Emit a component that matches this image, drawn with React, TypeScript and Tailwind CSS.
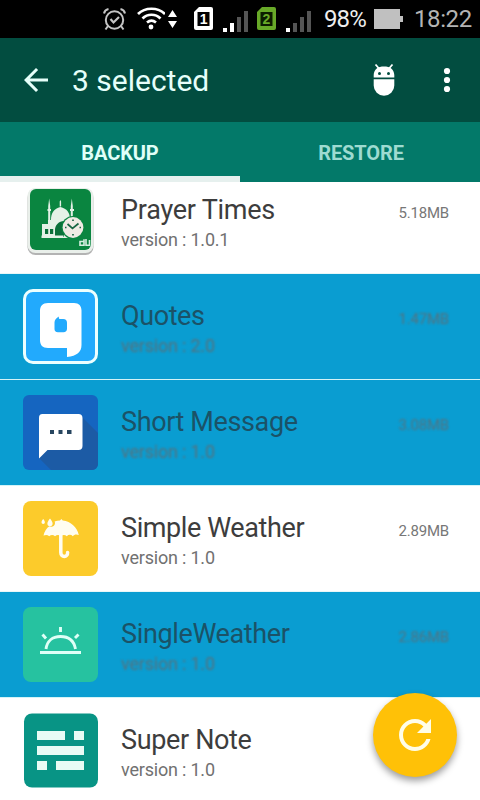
import type { ReactNode } from "react";
import clsx from "clsx";

type AppItem = {
  name: string;
  version: string;
  size: string;
  selected?: boolean;
  icon: ReactNode;
  nameClass: string;
};

function PrayerIcon() {
  return (
    <svg width="75" height="75" viewBox="0 0 75 75">
      <rect x="4.500" y="7" width="66" height="65" rx="8" fill="#9a9a9a" opacity=".75" />
      <rect x="4.500" y="5" width="66" height="65" rx="8" fill="#e9efea" />
      <rect x="7" y="6" width="61" height="61" rx="6" fill="#0a8540" />
      <g fill="#e4f1e6">
        <path d="M25.200 23l1-7.500 1 7.500v19h-2zM36.700 18.500l.7-1.500.7 1.500v5h-1.400zM47.800 23l1-7.500 1 7.500v20h-2z" />
        <path d="M24.500 26h3.500v2h-3.500zM47 26h4v2h-4z" />
        <path d="M28 37c0-7 3-11.500 9.400-13 6.600 1.500 9.600 6 9.600 12v19H19V41h6v-4z" />
      </g>
      <path d="M22 46h3.200v5H22zM27 46h3.200v5H27zM32 54V47c0-5 4-9 9-9v16z" fill="#0a7039" />
      <path d="M18.500 52.500h22v2.500h-22z" fill="#e4f1e6" />
      <circle cx="50" cy="44.500" r="11.500" fill="#0a8540" />
      <circle cx="50" cy="44.500" r="10.400" fill="#efebe4" />
      <path d="M44.500 41l5 4.500 6-5M50 36.500v1.500M50 51v1.500M42 44.500h1.500M56.500 44.500H58" stroke="#176543" strokeWidth="1.700" fill="none" />
      <path d="M60.500 58.500h-3.500v3.700h4v-6M63 56v6.200h3.500V57" stroke="#d5eee0" strokeWidth="1.600" fill="none" />
    </svg>
  );
}

function QuotesIcon() {
  return (
    <svg width="75" height="75" viewBox="0 0 75 75">
      <rect x="1.500" y="1.500" width="72" height="72" rx="8.500" fill="#22aafd" stroke="#ecffff" strokeWidth="3" />
      <path
        fillRule="evenodd"
        fill="#fff"
        d="M25 14h26c5 0 7.500 3 7.500 7.500V56c0 7-4.500 11-14.500 12v-9H25c-5.500 0-8-3-8-8V22c0-5 2.500-8 8-8zM36 27.500c-3 1.500-4.500 3.500-4.500 6V40c0 2 1 3.200 3.500 3.200h5.500c2.200 0 3.500-1.200 3.500-3.400v-6c0-2.500-1.200-3.800-3.800-3.800H36.500c-.8-.5-.8-1.300-.5-2.500z"
      />
    </svg>
  );
}

function MessageIcon() {
  return (
    <svg width="75" height="75" viewBox="0 0 75 75">
      <rect width="75" height="75" rx="6" fill="#1565c0" />
      <path d="M58 21l17 17v31a6 6 0 0 1-6 6H28L16 63l8-9h31z" fill="#1c5ba5" />
      <path d="M19.500 19h36c2.500 0 4 1.500 4 4v28c0 2.500-1.500 4-4 4H24.500L16 63.500V23c0-2.500 1-4 3.500-4z" fill="#fff" />
      <path d="M27 35h4v4h-4zM35.500 35h4v4h-4zM44 35h4.500v4H44z" fill="#27455f" />
    </svg>
  );
}

function UmbrellaIcon() {
  return (
    <svg width="75" height="75" viewBox="0 0 75 75">
      <rect width="75" height="75" rx="8" fill="#fccb2b" />
      <path
        fill="#fffdf0"
        d="M20.500 34.500C21.500 30 23.500 27 26.500 25.200c2.500 1.300 5.500-.2 5.500-3.200 0-.5-.2-1-.4-1.400 1.700-.6 3.500-1 5.400-1.100L38.400 18l1.300 1.500C48 20.500 54 26 55.800 34c-2.300-1-4.500-.7-6 1.200-1.700-1.800-4.200-1.800-6 0-1.700-1.700-4.200-1.700-6 0-1.700-1.700-4-1.700-5.800 0-1.700-1.700-4-1.700-5.800 0-1.500-1.500-3.500-1.700-5.700-.7z"
      />
      <path
        fill="#fffdf0"
        d="M27 17.500c1.800 2.400 2.600 3.800 2.600 5a2.600 2.600 0 0 1-5.200 0c0-1.200.8-2.600 2.600-5zM20.200 18c1.300 1.700 1.700 2.500 1.700 3.200a1.700 1.700 0 0 1-3.400 0c0-.7.4-1.500 1.700-3.200z"
      />
      <path d="M37.800 33v18.500c0 5.500 7.200 5 6.800 0" stroke="#fffdf0" strokeWidth="3.500" strokeLinecap="round" fill="none" />
    </svg>
  );
}

function SunIcon() {
  return (
    <svg width="75" height="75" viewBox="0 0 75 75">
      <rect width="75" height="75" rx="8" fill="#26c2a0" />
      <path
        d="M17 45.500h41M23 42c1-8 6.500-12.500 14.500-12.500S51 34 52.500 42M37.500 20v5M19.500 27.500l3.500 4M55.500 27.500L52 31"
        stroke="#dffff7"
        strokeWidth="2.900"
        fill="none"
      />
    </svg>
  );
}

function NoteIcon() {
  return (
    <svg width="75" height="75" viewBox="0 0 75 75">
      <rect x="1" y="0.500" width="74" height="74" rx="8" fill="#089485" />
      <path d="M14 18h28v9H14zM51 18h10v9H51zM14 33h47v9H14zM14 48h10v9H14zM33 48h28v9H33z" fill="#e8fbf5" />
    </svg>
  );
}

const apps: AppItem[] = [
  { name: "Prayer Times", version: "1.0.1", size: "5.18MB", icon: <PrayerIcon />, nameClass: "tracking-[-0.25px]" },
  { name: "Quotes", version: "2.0", size: "1.47MB", selected: true, icon: <QuotesIcon />, nameClass: "tracking-[-0.4px]" },
  { name: "Short Message", version: "1.0", size: "3.08MB", selected: true, icon: <MessageIcon />, nameClass: "tracking-[-0.38px]" },
  { name: "Simple Weather", version: "1.0", size: "2.89MB", icon: <UmbrellaIcon />, nameClass: "tracking-[-0.4px]" },
  { name: "SingleWeather", version: "1.0", size: "2.86MB", selected: true, icon: <SunIcon />, nameClass: "tracking-[-0.36px]" },
  { name: "Super Note", version: "1.0", size: "", icon: <NoteIcon />, nameClass: "tracking-[-0.35px]" },
];

function StatusBar() {
  return (
    <div className="flex h-[38px] shrink-0 items-center bg-black pl-[102px] text-[24px] leading-none">
      <svg width="26" height="38" viewBox="0 0 26 38" fill="none" stroke="#c4c4c4">
        <circle cx="12.500" cy="20" r="8.700" strokeWidth="2" />
        <path d="M8.500 19l3 3.500 5.500-5.500" strokeWidth="2.200" />
        <path d="M2 13.500c.5-2.500 2-4 4.500-4.500M18.500 9c2.500.5 4 2 4.500 4.500M6 26l-2.500 3.500M19 26l2.500 3.500" strokeWidth="2" />
      </svg>
      <svg width="29" height="38" viewBox="0 0 29 38" className="ml-2" fill="none" stroke="#fff">
        <path d="M2 14c7-7 20-7 27 0M6.500 18.500c5-5 13-5 18 0M11 22.500c3-2.500 6-2.500 9 0" strokeWidth="2.700" />
        <circle cx="15" cy="27" r="2.400" fill="#fff" stroke="none" />
      </svg>
      <svg width="9" height="38" viewBox="0 0 9 38" className="ml-[3px]" fill="#fff">
        <path d="M4.500 10L9 17H0zM4.500 28L9 21H0z" />
      </svg>
      <svg width="19" height="38" viewBox="0 0 19 38" className="ml-[17px]">
        <path d="M5 7h12a2 2 0 0 1 2 2v19a2 2 0 0 1-2 2H2a2 2 0 0 1-2-2V12z" fill="#fff" />
        <path d="M3.500 12h12v14h-12z" fill="#000" />
        <text x="5.800" y="24" fill="#fff" fontSize="14" fontWeight="700" fontFamily="Liberation Sans, sans-serif">1</text>
      </svg>
      <svg width="26" height="38" viewBox="0 0 26 38" className="ml-2.5">
        <path d="M0 28h4v4H0zM7 23h4v9H7z" fill="#fff" />
        <path d="M14 17h4v15h-4zM21 11h4v21h-4z" fill="#555" />
      </svg>
      <svg width="19" height="38" viewBox="0 0 19 38" className="ml-2">
        <path d="M5 7h12a2 2 0 0 1 2 2v19a2 2 0 0 1-2 2H2a2 2 0 0 1-2-2V12z" fill="#68a928" />
        <path d="M3.500 12h12v14h-12z" fill="#0c1c00" />
        <text x="5.500" y="24" fill="#68a928" fontSize="14" fontWeight="700" fontFamily="Liberation Sans, sans-serif">2</text>
      </svg>
      <svg width="26" height="38" viewBox="0 0 26 38" className="ml-[10px]">
        <path d="M0 28h4v4H0z" fill="#fff" />
        <path d="M7 23h4v9H7zM14 17h4v15h-4zM21 11h4v21h-4z" fill="#555" />
      </svg>
      <span className="ml-[12px] w-[44px] whitespace-nowrap tracking-[-0.9px] text-[#eee]">98%</span>
      <svg width="29" height="38" viewBox="0 0 29 38" className="ml-[6px]" fill="#c0c0c0">
        <path d="M0 9h26v7h3v6h-3v7H0z" />
      </svg>
      <span className="ml-[11px] whitespace-nowrap tracking-[-0.4px] text-[#b4b4b4]">18:22</span>
    </div>
  );
}

function Toolbar() {
  return (
    <header className="flex h-[84px] shrink-0 items-center bg-[#024d40] pl-[18px] text-[#e6fffa]">
      <svg width="36" height="36" viewBox="0 0 24 24" fill="currentColor">
        <path d="M20 11H7.830l5.590-5.590L12 4l-8 8 8 8 1.410-1.410L7.830 13H20v-2z" />
      </svg>
      <h1 className="ml-[18px] mt-0.5 text-[30px] leading-none">3 selected</h1>
      <div className="ml-auto flex items-center pr-[29px]">
        <svg width="24" height="34" viewBox="0 0 24 34">
          <path d="M3.500 1.500l3.500 4M20.500 1.500l-3.500 4" stroke="#fff" strokeWidth="1.800" />
          <path d="M1.700 14.500V12C2 6 6 3.500 12 3.500s10 2.500 10.300 8.500v2.500zM1.700 16.300h20.600v6.200a10.300 10.300 0 0 1-20.600 0z" fill="#fff" />
          <circle cx="7.500" cy="10.500" r="1.500" fill="#024d40" />
          <circle cx="16.500" cy="10.500" r="1.500" fill="#024d40" />
        </svg>
        <svg width="8" height="30" viewBox="0 0 8 30" className="ml-[47px]" fill="#fff">
          <circle cx="4" cy="6" r="3.100" />
          <circle cx="4" cy="15" r="3.100" />
          <circle cx="4" cy="24" r="3.100" />
        </svg>
      </div>
    </header>
  );
}

function Tabs() {
  return (
    <nav className="grid h-[60px] shrink-0 grid-cols-2 bg-[#037969] text-center text-[20px] font-bold leading-[62px] tracking-[-0.1px]">
      <div className="h-[60px] border-b-[6px] border-[#e6f0ee] text-[#e0fff8]">BACKUP</div>
      <div className="pl-[2px] text-[#9edbd1]">RESTORE</div>
    </nav>
  );
}

function AppRow({ item }: { item: AppItem }) {
  const { name, version, size, selected, icon, nameClass } = item;
  return (
    <li
      className={clsx(
        "flex h-[106px] shrink-0 border-b pl-[23px] pr-[31px]",
        selected ? "border-[#d3f3f7] bg-[#0a9dd1]" : "border-[#e8f7f8] bg-white"
      )}
    >
      <div className="mt-[15px] h-[75px] w-[75px] shrink-0">{icon}</div>
      <div className="ml-[23px] flex-1 whitespace-nowrap">
        <div className={clsx("mt-[26px] text-[27px] leading-8", nameClass, selected ? "text-[#1b5267]" : "text-[#3d3d3d]")}>
          {name}
        </div>
        <div
          className={clsx(
            "mt-1 text-[18px] leading-5 tracking-[-0.2px]",
            selected ? "text-[#54727f] blur-[0.9px]" : "text-[#717171]"
          )}
        >
          version : {version}
        </div>
      </div>
      <div
        className={clsx(
          "mt-[35px] text-[15px] leading-5 tracking-[-0.2px]",
          selected ? "text-[#54727f] blur-[0.9px]" : "text-[#777]"
        )}
      >
        {size}
      </div>
    </li>
  );
}

export default function App() {
  return (
    <div className="relative flex h-[800px] w-[480px] flex-col overflow-hidden bg-white font-['Roboto',sans-serif]">
      <StatusBar />
      <Toolbar />
      <Tabs />
      <main className="min-h-0 flex-1 overflow-hidden">
        {/* list is scrolled slightly, so the first row sits partly under the tabs */}
        <ul className="-mt-3.5 flex flex-col">
          {apps.map((item) => (
            <AppRow key={item.name} item={item} />
          ))}
        </ul>
      </main>
      <button
        type="button"
        aria-label="Refresh"
        className="absolute bottom-[23px] right-[23px] flex h-[84px] w-[84px] items-center justify-center rounded-full bg-[#ffc107] shadow-[0_4px_7px_rgba(0,0,0,0.38)]"
      >
        <svg width="48" height="48" viewBox="0 0 24 24" fill="#fffde8">
          <path d="M17.650 6.350C16.200 4.900 14.210 4 12 4c-4.420 0-7.990 3.580-7.990 8s3.570 8 7.990 8c3.730 0 6.840-2.550 7.730-6h-2.080c-.82 2.330-3.040 4-5.650 4-3.310 0-6-2.690-6-6s2.690-6 6-6c1.660 0 3.140.69 4.220 1.780L13 11h7V4l-2.350 2.350z" />
        </svg>
      </button>
    </div>
  );
}
